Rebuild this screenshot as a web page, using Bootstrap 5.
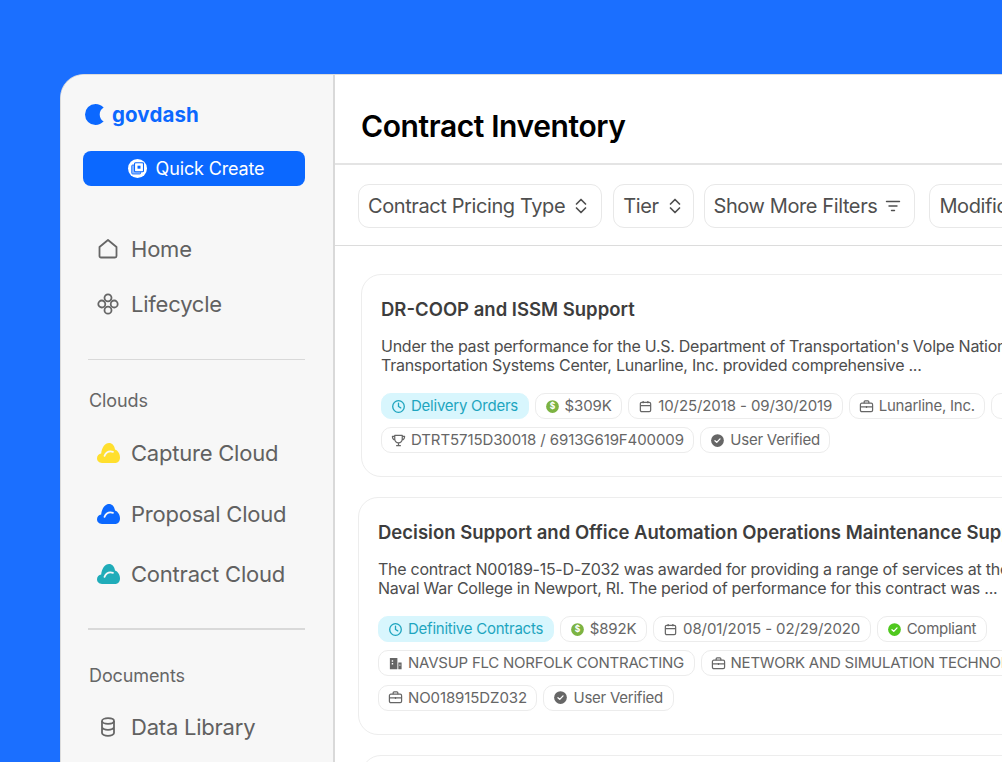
<!DOCTYPE html>
<html lang="en"><head><meta charset="utf-8"><title>Contract Inventory</title>
<link href="https://cdn.jsdelivr.net/npm/bootstrap@5.3.0/dist/css/bootstrap.min.css" rel="stylesheet">
<style>
html,body{height:762px;overflow:hidden}
body{background:#1b6fff;font-family:Inter,"Liberation Sans",sans-serif;color:#616161}
.gd-stage{padding:74px 0 0 60px;height:762px;overflow:hidden}
.gd-window{width:942px;height:688px;background:#fff;border-top:1px solid #dcdcdc;border-left:1px solid #dcdcdc;border-top-left-radius:24px;overflow:hidden}
.gd-side{width:274px;flex:none;background:#f7f7f7;border-right:2px solid #d9d9d9;padding:28px 28px 0 22px}
.gd-logo{height:23px;gap:6px;margin:0 0 0 2px;color:#0b68ff;font-weight:700;font-size:20.5px;line-height:23px;letter-spacing:.1px}
.gd-quick{width:222px;height:35px;margin-top:25px;background:#0b68ff;border:0;border-radius:8px;color:#fff;font-size:18px;gap:9px;padding:0 0 0 4px;letter-spacing:-.15px}
.gd-quick:hover{background:#0b68ff;color:#fff}
.gd-qi{width:19px;height:19px;border-radius:50%;background:#fff}
.gd-nav{font-size:22px;line-height:28px;color:#616161;gap:12px;margin-left:14px;letter-spacing:-.22px}
.gd-home{margin-top:49px}.gd-life{margin-top:27px}
.gd-rule{height:1px;background:#d9d9d9;margin-left:5px;margin-right:0}
.gd-r1{margin-top:41px}.gd-r2{margin-top:40px;height:2px}
.gd-label{font-size:18px;line-height:22px;margin-left:6px;margin-top:30px;color:#666;letter-spacing:-.1px}
.gd-l2{margin-top:35px}
.gd-c1{margin-top:27px}.gd-c2{margin-top:33px}.gd-c3{margin-top:32px}
.gd-lib{margin-top:26px}
.gd-ic{width:22px;height:22px;flex:none;display:block}
.gd-cl{width:23px;height:20px;flex:none;display:block;margin-right:-1px}
.gd-main{flex:1;min-width:0;overflow:hidden}
.gd-head{height:90px;border-bottom:2px solid #e4e4e4;padding:32px 0 0 26px}
.gd-head h1{font-size:30px;font-weight:600;line-height:38px;color:#000;margin:0;letter-spacing:-.4px}
.gd-filters{height:81px;border-bottom:1px solid #dcdcdc;padding:19px 0 0 23px;gap:10px;white-space:nowrap}
.gd-f{height:44px;border:1px solid #e8e8e8;border-radius:11px;font-size:20px;color:#4f4f4f;padding:0 12px 0 9px;gap:8px;flex:none;letter-spacing:-.4px}
.gd-f svg{flex:none}
.gd-tier{margin-left:1px;padding-right:10px}
.gd-show{margin-right:4px;padding-right:13px}
.gd-cardb{width:820px;border:1px solid #ededed;border-radius:20px;background:#fff;padding:0 19px;flex:none}
.gd-k1{margin:28px 0 0 26px;height:203px;padding-top:20px}
.gd-k2{margin:20px 0 0 23px;height:238px;padding-top:20px}
.gd-k3{margin:20px 0 0 26px;height:80px}
.gd-cardb h2{font-size:18.5px;font-weight:600;line-height:28px;color:#3d3d3d;margin:0;white-space:nowrap}
.gd-desc{font-size:16px;line-height:19px;color:#4d4d4d;margin:14px 0 18px;white-space:nowrap;letter-spacing:-.26px}
.gd-desc span{display:block}
.gd-chips{gap:8.4px 6px}
.gd-chip{height:26px;border:1px solid #ececec;border-radius:10px;font-size:15px;line-height:24px;padding:0 9.5px 0 9px;gap:5px;color:#666;white-space:nowrap;background:#fff;letter-spacing:-.24px}
.gd-num{letter-spacing:-.1px}
.gd-type{background:#d8f6fd;border-color:#d8f6fd;color:#1ea5bf}
.gd-chip svg{flex:none;width:15px;height:15px;display:block}
</style></head>
<body>
<svg width="0" height="0" class="d-block" aria-hidden="true"><defs>
<symbol id="i-cloud" viewBox="0 0 23 20"><path fill="currentColor" d="M5 20C2.200 20 0 18 0 15.300C0 12.800 1.800 10.800 4.200 10.500C4.600 4.800 8 0 12 0C15.200 0 17.400 2.500 18 6.500C20.800 7.500 23 10.500 23 14.500C23 17.800 21 20 18 20Z"/><path fill="none" stroke="#f7f7f7" stroke-width="1.800" stroke-linecap="round" d="M7.500 12.800C9 9.300 12.300 7.800 16 8.800"/></symbol>
<symbol id="i-clock" viewBox="0 0 16 16"><circle cx="8" cy="8" r="6.200" fill="none" stroke="currentColor" stroke-width="1.400"/><path d="M8 4.500V8l2.400 1.500" fill="none" stroke="currentColor" stroke-width="1.400" stroke-linecap="round"/></symbol>
<symbol id="i-cal" viewBox="0 0 16 16"><rect x="2.500" y="3.500" width="11" height="10" rx="1.500" fill="none" stroke="currentColor" stroke-width="1.300"/><path d="M2.500 7h11M5.500 2v2.500M10.500 2v2.500" fill="none" stroke="currentColor" stroke-width="1.300"/></symbol>
<symbol id="i-money" viewBox="0 0 16 16"><circle cx="8" cy="8" r="6.800" fill="#7cb342"/><text x="8" y="11" font-size="9" font-weight="700" text-anchor="middle" fill="#fff" font-family="Inter,sans-serif">$</text></symbol>
<symbol id="i-case" viewBox="0 0 16 16"><rect x="1.500" y="4.500" width="13" height="9" rx="1.500" fill="none" stroke="currentColor" stroke-width="1.300"/><path d="M5.500 4.500V3a1 1 0 0 1 1-1h3a1 1 0 0 1 1 1v1.500M1.500 8.500h13M8 7.500v2" fill="none" stroke="currentColor" stroke-width="1.300"/></symbol>
<symbol id="i-trophy" viewBox="0 0 16 16"><path d="M4 2.500h8v4a4 4 0 0 1-8 0zM4 3.500H1.500c0 2.500 1 3.800 3 4M12 3.500h2.500c0 2.500-1 3.800-3 4M8 10.500v3M5.500 13.500h5" fill="none" stroke="currentColor" stroke-width="1.300" stroke-linejoin="round"/></symbol>
<symbol id="i-check" viewBox="0 0 16 16"><circle cx="8" cy="8" r="6.800" fill="currentColor"/><path d="M5.300 8.200l1.900 1.800 3.500-3.700" fill="none" stroke="#fff" stroke-width="1.400" stroke-linecap="round" stroke-linejoin="round"/></symbol>
<symbol id="i-bld" viewBox="0 0 16 16"><path fill="currentColor" fill-rule="evenodd" d="M2 2h8v12H2zM4 4.500V6h1.500V4.500zm0 3V9h1.500V7.500zM11 7h3.500v7H11zM12.200 9v1.500h1V9z"/></symbol>
<symbol id="i-updown" viewBox="0 0 16 16"><path d="M3.500 6L8 1.500 12.500 6M3.500 10L8 14.500 12.500 10" fill="none" stroke="currentColor" stroke-width="1.700" stroke-linecap="round" stroke-linejoin="round"/></symbol>
</defs></svg>
<div class="gd-stage">
<div class="gd-window d-flex">
<aside class="gd-side">
  <div class="gd-logo d-flex align-items-center">
    <svg width="21" height="21" viewBox="0 0 20 20" aria-hidden="true"><path fill="#0b68ff" d="M10 0C13 0 15.800 1.200 17.800 3.500C15.600 4.300 14 6.800 14 10C14 13.200 15.600 15.700 17.800 16.500C15.800 18.800 13 20 10 20A10 10 0 0 1 10 0Z"/></svg>
    <span>govdash</span>
  </div>
  <button class="btn gd-quick d-flex align-items-center justify-content-center" type="button">
    <span class="gd-qi d-flex align-items-center justify-content-center"><svg width="13" height="13" viewBox="0 0 13 13" aria-hidden="true"><rect x=".7" y="3" width="9" height="9" rx="1" fill="#8fbaff" stroke="#0b68ff" stroke-width=".8"/><rect x="3.500" y=".7" width="9" height="9" rx="1" fill="#fff" stroke="#0b68ff" stroke-width="1.100"/><rect x="6.500" y="3.700" width="3" height="3" fill="#0b68ff"/></svg></span>
    <span>Quick Create</span>
  </button>
  <div class="gd-nav gd-home d-flex align-items-center"><svg class="gd-ic" viewBox="0 0 22 22" aria-hidden="true"><path d="M2.500 9L11 2l8.500 7v9a1.500 1.500 0 0 1-1.500 1.500H4A1.500 1.500 0 0 1 2.500 18z" fill="none" stroke="#666" stroke-width="1.800" stroke-linejoin="round"/></svg><span>Home</span></div>
  <div class="gd-nav gd-life d-flex align-items-center"><svg class="gd-ic" viewBox="0 0 22 22" aria-hidden="true"><g fill="none" stroke="#666" stroke-width="1.800"><circle cx="11" cy="4.800" r="3.500"/><circle cx="11" cy="17.200" r="3.500"/><circle cx="4.800" cy="11" r="3.500"/><circle cx="17.200" cy="11" r="3.500"/></g></svg><span>Lifecycle</span></div>
  <div class="gd-rule gd-r1"></div>
  <div class="gd-label">Clouds</div>
  <div class="gd-nav gd-c1 d-flex align-items-center"><svg class="gd-cl" style="color:#ffdf2e" aria-hidden="true"><use href="#i-cloud"/></svg><span>Capture Cloud</span></div>
  <div class="gd-nav gd-c2 d-flex align-items-center"><svg class="gd-cl" style="color:#0b68ff" aria-hidden="true"><use href="#i-cloud"/></svg><span>Proposal Cloud</span></div>
  <div class="gd-nav gd-c3 d-flex align-items-center"><svg class="gd-cl" style="color:#20acb9" aria-hidden="true"><use href="#i-cloud"/></svg><span>Contract Cloud</span></div>
  <div class="gd-rule gd-r2"></div>
  <div class="gd-label gd-l2">Documents</div>
  <div class="gd-nav gd-lib d-flex align-items-center"><svg class="gd-ic" viewBox="0 0 22 22" aria-hidden="true"><g fill="none" stroke="#666" stroke-width="1.800"><ellipse cx="11" cy="5" rx="6" ry="2.800"/><path d="M5 5v12c0 1.500 2.700 2.800 6 2.800s6-1.300 6-2.800V5M5 11c0 1.500 2.700 2.800 6 2.800s6-1.300 6-2.800"/></g></svg><span>Data Library</span></div>
</aside>
<main class="gd-main">
  <div class="gd-head"><h1>Contract Inventory</h1></div>
  <div class="gd-filters d-flex">
    <div class="gd-f d-flex align-items-center"><span>Contract Pricing Type</span><svg width="16" height="16" aria-hidden="true"><use href="#i-updown"/></svg></div>
    <div class="gd-f gd-tier d-flex align-items-center"><span>Tier</span><svg width="16" height="16" aria-hidden="true"><use href="#i-updown"/></svg></div>
    <div class="gd-f gd-show d-flex align-items-center"><span>Show More Filters</span><svg width="16" height="16" viewBox="0 0 16 16" aria-hidden="true"><path d="M1.500 3.500h13M4 8h8M6.500 12.500h3" stroke="currentColor" stroke-width="1.400" stroke-linecap="round"/></svg></div>
    <div class="gd-f d-flex align-items-center"><span>Modification Date</span></div>
  </div>
  <article class="gd-cardb gd-k1">
    <h2>DR-COOP and ISSM Support</h2>
    <p class="gd-desc"><span>Under the past performance for the U.S. Department of Transportation's Volpe National</span><span>Transportation Systems Center, Lunarline, Inc. provided comprehensive ...</span></p>
    <div class="gd-chips d-flex flex-wrap">
      <span class="gd-chip gd-type d-flex align-items-center"><svg aria-hidden="true"><use href="#i-clock"/></svg>Delivery Orders</span>
      <span class="gd-chip gd-num d-flex align-items-center"><svg aria-hidden="true"><use href="#i-money"/></svg>$309K</span>
      <span class="gd-chip gd-num d-flex align-items-center"><svg aria-hidden="true"><use href="#i-cal"/></svg>10/25/2018 - 09/30/2019</span>
      <span class="gd-chip d-flex align-items-center"><svg aria-hidden="true"><use href="#i-case"/></svg>Lunarline, Inc.</span>
      <span class="gd-chip d-flex align-items-center"><svg style="color:#4fc81e" aria-hidden="true"><use href="#i-check"/></svg>Compliant</span>
      <span class="gd-chip gd-num d-flex align-items-center"><svg aria-hidden="true"><use href="#i-trophy"/></svg>DTRT5715D30018 / 6913G619F400009</span>
      <span class="gd-chip d-flex align-items-center"><svg aria-hidden="true"><use href="#i-check"/></svg>User Verified</span>
    </div>
  </article>
  <article class="gd-cardb gd-k2">
    <h2>Decision Support and Office Automation Operations Maintenance Support</h2>
    <p class="gd-desc"><span>The contract N00189-15-D-Z032 was awarded for providing a range of services at the</span><span>Naval War College in Newport, RI. The period of performance for this contract was ...</span></p>
    <div class="gd-chips d-flex flex-wrap">
      <span class="gd-chip gd-type d-flex align-items-center"><svg aria-hidden="true"><use href="#i-clock"/></svg>Definitive Contracts</span>
      <span class="gd-chip gd-num d-flex align-items-center"><svg aria-hidden="true"><use href="#i-money"/></svg>$892K</span>
      <span class="gd-chip gd-num d-flex align-items-center"><svg aria-hidden="true"><use href="#i-cal"/></svg>08/01/2015 - 02/29/2020</span>
      <span class="gd-chip d-flex align-items-center"><svg style="color:#4fc81e" aria-hidden="true"><use href="#i-check"/></svg>Compliant</span>
      <span class="gd-chip d-flex align-items-center"><svg aria-hidden="true"><use href="#i-bld"/></svg>NAVSUP FLC NORFOLK CONTRACTING</span>
      <span class="gd-chip d-flex align-items-center"><svg aria-hidden="true"><use href="#i-case"/></svg>NETWORK AND SIMULATION TECHNOLOGIES</span>
      <span class="gd-chip gd-num d-flex align-items-center"><svg aria-hidden="true"><use href="#i-case"/></svg>NO018915DZ032</span>
      <span class="gd-chip d-flex align-items-center"><svg aria-hidden="true"><use href="#i-check"/></svg>User Verified</span>
    </div>
  </article>
  <article class="gd-cardb gd-k3"></article>
</main>
</div>
</div>
</body></html>
